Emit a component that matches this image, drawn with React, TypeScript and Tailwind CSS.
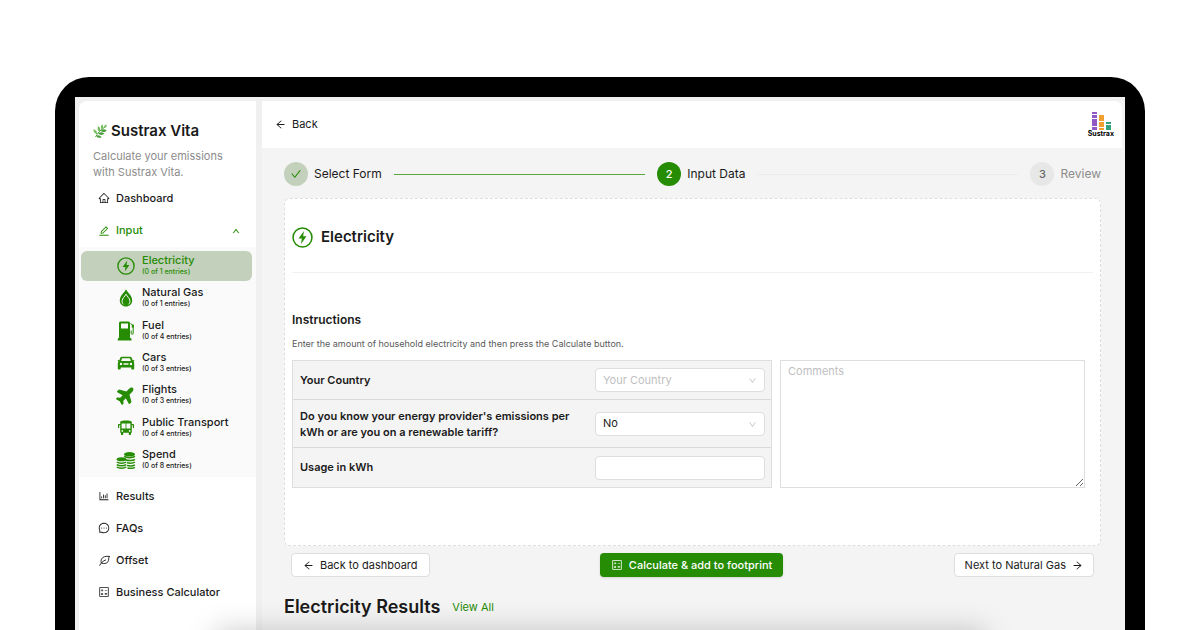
import type { ReactNode } from "react";
import {
  AiOutlineArrowLeft,
  AiOutlineArrowRight,
  AiOutlineBarChart,
  AiOutlineCalculator,
  AiOutlineCheck,
  AiOutlineDown,
  AiOutlineEdit,
  AiOutlineHome,
  AiOutlineMessage,
  AiOutlineUp,
} from "react-icons/ai";
import { FaPlane } from "react-icons/fa";

function BoltIcon({ className }: { className?: string }) {
  return (
    <svg viewBox="0 0 20 20" fill="none" className={className}>
      <circle cx="10" cy="10" r="9" stroke="currentColor" strokeWidth="1.5" />
      <path d="M11.4 3.8 6.2 11h3.2l-.8 5.200 5.200-7.400h-3.200z" fill="currentColor" />
    </svg>
  );
}

function FlameIcon() {
  return (
    <svg viewBox="0 0 18 18" className="size-[18px]">
      <path
        d="M9 .3C7.500 3.500 2.800 6.500 2.800 11.600c0 3.500 2.700 6 6.200 6s6.200-2.500 6.200-6C15.200 6.500 10.500 3.500 9 .3z"
        fill="currentColor"
      />
      <path
        d="M6.400 15.300C5.300 14.300 4.900 13.200 5.100 11.700 5.400 9.200 7.800 7.600 9 5.200c1.200 2.400 3.600 4 3.900 6.500.2 1.500-.2 2.600-1.300 3.600"
        fill="none"
        stroke="#fafafa"
        strokeWidth="1"
      />
    </svg>
  );
}

function FuelIcon() {
  return (
    <svg viewBox="0 0 18 20" className="h-5 w-[18px]">
      <path
        fillRule="evenodd"
        d="M3.500.5h8A1.500 1.500 0 0 1 13 2v15h.5a1 1 0 0 1 1 1v1.500H.8V18a1 1 0 0 1 1-1H2V2A1.500 1.500 0 0 1 3.500.5zM4 2.500v5h7v-5z"
        fill="currentColor"
      />
      <path
        d="M13.500 2.500l2.700 2.200v7.600a1 1 0 0 1-2 0V9.500"
        fill="none"
        stroke="currentColor"
        strokeWidth="1"
      />
      <path d="M14.800 3.600h2v3h-2z" fill="currentColor" />
    </svg>
  );
}

function CarIcon() {
  return (
    <svg viewBox="0 0 18 14" className="h-3.5 w-[18px]">
      <path
        fillRule="evenodd"
        d="M4.800.8h8.400c.8 0 1.300.4 1.600 1.100l.9 2.400 1.500-.4v1.300l-.9.3c.6.5.9 1.100.9 1.900v5.100c0 .6-.4 1-1 1h-.9c-.6 0-1-.4-1-1v-1H3.700v1c0 .6-.4 1-1 1h-.9c-.6 0-1-.4-1-1V7.400c0-.8.3-1.400.9-1.900l-.9-.3V3.900l1.500.4.9-2.400C3.500 1.200 4 .8 4.800.8zM5 2.300 4.100 5h9.800L13 2.300zM4 6.800a1.200 1.200 0 1 0 0 2.400 1.200 1.200 0 0 0 0-2.400zm10 0a1.200 1.200 0 1 0 0 2.400 1.200 1.200 0 0 0 0-2.400zM6.500 7.200v1.500h5V7.200z"
        fill="currentColor"
      />
    </svg>
  );
}

function BusIcon() {
  return (
    <svg viewBox="0 0 18 16" className="h-4 w-[18px]">
      <path
        fillRule="evenodd"
        d="M4.500 1C6 .6 7.500.5 9 .5s3 .1 4.500.5c.8.2 1.300.8 1.300 1.600V4h1.400c.5 0 .8.3.8.8V8h-1.200V5.200h-1v7.600H14v1.700c0 .3-.2.500-.5.5h-1.200c-.3 0-.5-.2-.5-.5v-1.700H6.200v1.700c0 .3-.2.500-.5.5H4.500c-.3 0-.5-.2-.5-.5v-1.700h-.8V5.200h-1V8H1V4.800c0-.5.300-.8.800-.8h1.400V2.600c0-.8.500-1.400 1.300-1.600zM4.600 3.500v5h8.800v-5zM5.300 10a.9.9 0 1 0 0 1.800.9.9 0 0 0 0-1.800zm7.400 0a.9.9 0 1 0 0 1.800.9.9 0 0 0 0-1.800z"
        fill="currentColor"
      />
      <path d="M8.600 3h.8v6h-.8z" fill="currentColor" />
    </svg>
  );
}

function CoinsIcon() {
  return (
    <svg viewBox="0 0 20 18" className="h-[18px] w-5" fill="none">
      <ellipse cx="13.500" cy="3.300" rx="5.500" ry="2.300" fill="currentColor" />
      <ellipse cx="5.500" cy="8.300" rx="4.800" ry="2" fill="currentColor" />
      <path
        d="M8.200 5.400c2 1.700 8.600 1.700 10.700 0M9.500 8.700c2.600 1.200 7.400 1.100 9.400-.4M11 11.700c2.600.6 6.400.3 7.900-.7M11 14.500c2.600.6 6.400.3 7.900-.7M11.500 17c2.600.4 6 .2 7.400-.7M.8 11c2 1.500 7.400 1.500 9.400 0M.8 13.600c2 1.500 7.400 1.500 9.400 0M.8 16c2 1.600 7.400 1.600 9.400 0"
        stroke="currentColor"
        strokeWidth="1.500"
      />
    </svg>
  );
}

function LeafIcon() {
  return (
    <svg
      viewBox="0 0 12 12"
      className="size-[11px]"
      fill="none"
      stroke="currentColor"
      strokeLinecap="round"
    >
      <path d="M11 1.500C7.500 1 3.800 1.900 2.700 4.500c-.7 1.700-.5 3.200.1 4.500 2.500.6 5.700.5 7-1.600C10.800 5.800 10.400 3.300 11 1.500z" />
      <path d="M.8 11.300C2.200 8.500 4.200 6.500 7.300 5.400" />
    </svg>
  );
}

// Herb sprig next to the product name
function HerbIcon() {
  return (
    <svg viewBox="0 0 14 14" className="size-3.5">
      <path d="M2.500 13C4.500 9.500 7.500 5.500 12 3" fill="none" stroke="#4a9f3c" />
      <g fill="#74bd5c">
        <path d="M6.400 7.800C4.300 6.200 4 4 5.500 1.900 7.500 3.800 7.800 6 6.400 7.800z" />
        <path d="M8.800 5.400C7.300 3.800 7.500 2 9.200.3c1.400 1.900 1.200 3.700-.4 5.100z" />
        <path d="M4.200 10.200C1.700 9.600.4 7.900.3 5.300c2.700.7 4.200 2.300 3.900 4.900z" />
        <path d="M10.700 3.900c0-1.800 1-3 3-3.500.2 2-.9 3.400-3 3.500z" />
      </g>
      <g fill="#4a9f3c">
        <path d="M5.200 9.600c1.900-1.700 4.300-1.700 6.300.2-2.300 1.600-4.700 1.500-6.300-.2z" />
        <path d="M7.800 6.800c1.700-1.800 3.800-1.900 5.900-.3-1.900 1.900-4.200 2-5.900.3z" />
        <path d="M3.300 11.900c1.800-1.200 4-.6 5.300 1.400-2 1-4.200.5-5.300-1.400z" />
      </g>
    </svg>
  );
}

function SustraxLogo() {
  return (
    <div className="flex flex-col items-center">
      <svg viewBox="0 0 20 18" className="h-[18px] w-5">
        <g fill="#9159c4">
          <path d="M1 0h5v2H1zM1 3h5v3H1zM1 7h5v7H1zM1 15h5v3H1z" />
        </g>
        <g fill="#f0a030">
          <path d="M8 3h5v6H8zM8 10h5v5H8zM8 16h5v2H8z" />
        </g>
        <g fill="#35a07c">
          <path d="M15 10h5v2h-5zM15 13h5v5h-5z" />
        </g>
      </svg>
      <span className="text-[7px] leading-[7px] font-bold text-black">
        Sustrax
      </span>
    </div>
  );
}

const entries: { name: string; total: number; icon: ReactNode }[] = [
  { name: "Electricity", total: 1, icon: <BoltIcon className="size-[18px]" /> },
  { name: "Natural Gas", total: 1, icon: <FlameIcon /> },
  { name: "Fuel", total: 4, icon: <FuelIcon /> },
  { name: "Cars", total: 3, icon: <CarIcon /> },
  {
    name: "Flights",
    total: 3,
    icon: <FaPlane className="size-5 shrink-0 -rotate-45" />,
  },
  { name: "Public Transport", total: 4, icon: <BusIcon /> },
  { name: "Spend", total: 8, icon: <CoinsIcon /> },
];

const links = [
  { name: "Results", icon: <AiOutlineBarChart className="size-3" /> },
  { name: "FAQs", icon: <AiOutlineMessage className="size-3" /> },
  { name: "Offset", icon: <LeafIcon /> },
  { name: "Business Calculator", icon: <AiOutlineCalculator className="size-3" /> },
];

function Sidebar() {
  return (
    <aside className="w-[177px] shrink-0 rounded-tl-lg bg-white text-[11px] font-medium">
      <div className="px-3.5 pt-[21px]">
        <div className="flex items-center gap-1">
          <HerbIcon />
          <span className="text-[15px] leading-[18px] font-semibold whitespace-nowrap">
            Sustrax Vita
          </span>
        </div>
        <p className="mt-2 leading-4 font-normal text-[#8c8c8c]">
          Calculate your emissions with Sustrax Vita.
        </p>
      </div>
      <nav>
        <a href="#" className="mt-0.5 flex h-8 items-center gap-1.5 pl-[19px]">
          <AiOutlineHome className="size-3" />
          Dashboard
        </a>
        <button
          type="button"
          className="flex h-[33px] w-full items-center gap-1.5 pr-4 pl-[19px] text-[#268c04]"
        >
          <AiOutlineEdit className="size-3" />
          <span className="grow text-left">Input</span>
          <AiOutlineUp className="size-2 stroke-40" />
        </button>
        <ul className="flex h-[230px] flex-col justify-between bg-[#fafafa] pt-1 pr-1 pb-0.5 pl-0.5">
          {entries.map((entry, i) => (
            <li key={entry.name}>
              <a
                href="#"
                className={
                  i === 0
                    ? "flex h-[30px] items-center gap-1.5 rounded-md bg-[#c3d0bb] pl-[34px] text-[#268c04]"
                    : "flex h-[30px] items-center gap-1.5 pl-[34px]"
                }
              >
                <span className="flex w-[21px] shrink-0 justify-center text-[#268c04]">
                  {entry.icon}
                </span>
                <span className="flex flex-col pb-[3px] whitespace-nowrap">
                  <span className="leading-[14px]">{entry.name}</span>
                  <span className="text-[7px] leading-[9px]">
                    (0 of {entry.total} entries)
                  </span>
                </span>
              </a>
            </li>
          ))}
        </ul>
        <ul className="pt-[3px]">
          {links.map((link) => (
            <li key={link.name}>
              <a
                href="#"
                className="flex h-8 items-center gap-1.5 pl-[19px] whitespace-nowrap"
              >
                <span className="flex size-3 items-center justify-center">
                  {link.icon}
                </span>
                {link.name}
              </a>
            </li>
          ))}
        </ul>
      </nav>
    </aside>
  );
}

function Steps() {
  return (
    <ol className="flex items-center text-xs leading-4 whitespace-nowrap">
      <li className="flex grow basis-0 items-center gap-1.5">
        <span className="flex size-6 items-center justify-center rounded-full bg-[#c3d0bb] text-[#268c04]">
          <AiOutlineCheck className="size-3" />
        </span>
        Select Form
        <span className="mx-1.5 h-px grow bg-[#58a83f]" />
      </li>
      <li className="ml-1.5 flex grow basis-0 items-center gap-1.5">
        <span className="flex size-6 items-center justify-center rounded-full bg-[#268c04] text-[11px] font-medium text-white">
          2
        </span>
        Input Data
        <span className="mx-1.5 h-px grow bg-[#ececec]" />
      </li>
      <li className="ml-1.5 flex items-center gap-1.5 text-[#8c8c8c]">
        <span className="flex size-6 items-center justify-center rounded-full bg-[#e7e7e7] text-[11px] font-medium text-[#666]">
          3
        </span>
        Review
      </li>
    </ol>
  );
}

function Select({ id, options }: { id: string; options: string[] }) {
  return (
    <div className="relative w-[170px] shrink-0">
      <select
        id={id}
        className={
          id === "country"
            ? "h-6 w-full appearance-none rounded border border-[#dedede] bg-white px-[7px] text-[11px] font-normal text-[#bfbfbf]"
            : "h-6 w-full appearance-none rounded border border-[#dedede] bg-white px-[7px] text-[11px] font-normal"
        }
      >
        {options.map((option) => (
          <option key={option}>{option}</option>
        ))}
      </select>
      <AiOutlineDown className="pointer-events-none absolute top-2 right-2 size-[9px] text-[#bfbfbf]" />
    </div>
  );
}

function ElectricityForm() {
  return (
    <section className="mt-3 h-[348px] rounded-md border border-dashed border-[#dedede] bg-white px-[7px] text-[11px]">
      <h1 className="flex h-[74px] items-center gap-2 border-b border-[#f2f2f2] pt-[3px] text-[15px] font-semibold">
        <BoltIcon className="size-[21px] text-[#268c04]" />
        Electricity
      </h1>
      <h2 className="mt-[39px] text-xs leading-4 font-semibold">Instructions</h2>
      <p className="mt-2.5 text-[9px] leading-3 text-[#595959]">
        Enter the amount of household electricity and then press the Calculate
        button.
      </p>
      <form className="mt-2.5 flex gap-2 pr-2">
        <div className="grow-3 basis-0 border border-[#dedede] bg-[#f4f4f4] font-semibold">
          <div className="flex h-[39px] items-center justify-between border-b border-[#dadada] pr-1.5 pl-[7px]">
            <label htmlFor="country">Your Country</label>
            <Select id="country" options={["Your Country"]} />
          </div>
          <div className="flex h-12 items-center justify-between border-b border-[#dadada] pr-1.5 pl-[7px]">
            <label htmlFor="tariff" className="w-[272px] leading-4">
              Do you know your energy provider's emissions per kWh or are you on
              a renewable tariff?
            </label>
            <Select id="tariff" options={["No", "Yes"]} />
          </div>
          <div className="flex h-[39px] items-center justify-between pr-1.5 pl-[7px]">
            <label htmlFor="usage">Usage in kWh</label>
            <input
              id="usage"
              type="text"
              className="h-6 w-[170px] rounded border border-[#dedede] bg-white px-[7px]"
            />
          </div>
        </div>
        <textarea
          aria-label="Comments"
          placeholder="Comments"
          className="w-[305px] shrink-0 border border-[#dedede] bg-white px-[7px] py-0.5 leading-4 placeholder:text-[#bfbfbf]"
        />
      </form>
    </section>
  );
}

export default function App() {
  return (
    <div className="relative h-screen overflow-hidden bg-white px-[55px] pt-[77px] font-['Inter','Liberation_Sans',sans-serif] text-[#1a1a1a]">
      <div className="h-full overflow-hidden rounded-t-[34px] bg-black px-5 pt-5">
        <div className="flex h-full gap-1.5 bg-[#f0f0f0] pt-1 pl-1">
          <Sidebar />
          <div className="min-w-0 grow bg-[#f4f4f4]">
            <header className="mr-[3px] flex h-[47px] items-center justify-between rounded-tr-lg bg-white pr-2 pl-[13px]">
              <a href="#" className="flex items-center gap-1.5 text-[11px]">
                <AiOutlineArrowLeft className="size-[11px]" />
                Back
              </a>
              <SustraxLogo />
            </header>
            <main className="pt-3.5 pr-6 pl-[22px]">
              <Steps />
              <ElectricityForm />
              <div className="mt-[7px] flex items-center justify-between px-[7px] text-[11px]">
                <button
                  type="button"
                  className="flex h-6 items-center gap-1.5 rounded border border-[#dedede] bg-white px-[11px]"
                >
                  <AiOutlineArrowLeft className="size-[11px]" />
                  Back to dashboard
                </button>
                <button
                  type="submit"
                  className="flex h-6 items-center gap-1.5 rounded bg-[#268c04] px-[11px] font-medium text-white shadow-sm"
                >
                  <AiOutlineCalculator className="size-3" />
                  Calculate &amp; add to footprint
                </button>
                <button
                  type="button"
                  className="flex h-6 items-center gap-1.5 rounded border border-[#dedede] bg-white px-2.5"
                >
                  Next to Natural Gas
                  <AiOutlineArrowRight className="size-[11px]" />
                </button>
              </div>
              <div className="mt-[18px] flex items-center gap-3">
                <h2 className="text-lg leading-6 font-semibold">
                  Electricity Results
                </h2>
                <a href="#" className="text-[11px] text-[#268c04]">
                  View All
                </a>
              </div>
            </main>
          </div>
        </div>
      </div>
      {/* soft shadow rising from the laptop base */}
      <div className="pointer-events-none absolute inset-x-[215px] -bottom-10 h-10 bg-black/20 blur-[14px]" />
    </div>
  );
}
